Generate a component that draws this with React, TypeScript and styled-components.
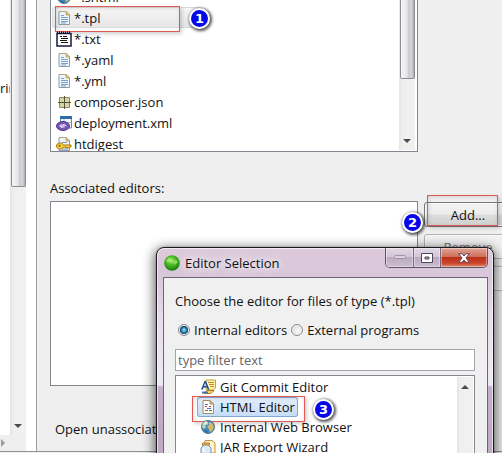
import React from "react";
import styled, { createGlobalStyle, css } from "styled-components";

const GlobalStyle = createGlobalStyle`
  *, *::before, *::after { box-sizing: border-box; }
  html, body { margin: 0; height: 100%; }
  #root { height: 100%; }
  body, button, input {
    font-family: "Open Sans", "Noto Sans", sans-serif;
    font-size: 13px;
    color: #111;
  }
  body { background: #efefef; overflow: hidden; }
  ul { list-style: none; margin: 0; padding: 0; }
`;

/* ---------- page ---------- */

const Page = styled.div`
  position: relative;
  display: flex;
  flex-direction: column;
  height: 100vh;
  overflow: hidden;
`;

const Panes = styled.div`
  display: flex;
  flex: 1;
  min-height: 0;
  margin-bottom: 1px;
  border-bottom: 1px solid #8e9297;
`;

const Sidebar = styled.aside`
  display: flex;
  flex-direction: column;
  width: 37px;
  padding-right: 10px;
  background: #fff;
  border-right: 1px solid #9b9fa4;
`;

const SidebarTop = styled.div`
  display: flex;
  flex: 1;
  min-height: 0;
`;

const SidebarTree = styled.div`
  flex: 1;
  overflow: hidden;
  padding-top: 78px;
  line-height: 20px;
  white-space: nowrap;
`;

const HorizontalBar = styled.div`
  display: flex;
  align-items: center;
  height: 16px;
  background: #efefef;
`;

const Main = styled.main`
  flex: 1;
  min-width: 0;
  padding: 0 4px 0 13px;
`;

/* ---------- scroll bars ---------- */

const Track = styled.div<{ $atEnd?: boolean }>`
  display: flex;
  flex-direction: column;
  justify-content: space-between;
  align-items: center;
  flex: none;
  width: 16px;
  padding-bottom: ${(p) => (p.$atEnd ? "6px" : "0")};
  background: linear-gradient(90deg, #e4e4e4, #efefef 20%, #f1f1f1);
`;

const Thumb = styled.div<{ $length: number }>`
  width: 15px;
  height: ${(p) => p.$length}px;
  border: 1px solid #8b8d91;
  border-top: 0;
  border-radius: 0 0 2px 2px;
  background: linear-gradient(90deg, #f6f6f6, #e6e6e8 45%, #c9cacf 60%, #d6d6da 80%, #a9aab0);
`;

type Direction = "up" | "down" | "right";
const arrowPaths: Record<Direction, string> = {
  up: "M0 5 4 1 8 5Z",
  down: "M0 1H8L4 5Z",
  right: "M1 0 5 4 1 8Z",
};
const Arrow = ({ direction }: { direction: Direction }) => (
  <svg width="8" height={direction === "right" ? 8 : 6} aria-hidden="true">
    <path d={arrowPaths[direction]} fill={direction === "right" ? "#999" : "#4b4b4b"} />
  </svg>
);

/* ---------- lists ---------- */

const FileList = styled.div`
  display: flex;
  height: 152px;
  margin-right: 80px;
  padding: 0 2px 1px 1px;
  overflow: hidden;
  background: #fff;
  border: 1px solid #828790;
  border-top: 0;
`;

const FileRows = styled.ul`
  flex: 1;
  margin-top: -14px;
`;

const FileRow = styled.li<{ $selected?: boolean }>`
  position: relative;
  display: flex;
  align-items: center;
  gap: 2px;
  width: 150px;
  height: 21px;
  padding-left: 4px;
  line-height: 20px;
  white-space: nowrap;
  ${(p) =>
    p.$selected &&
    css`
      border-radius: 3px;
      background: linear-gradient(#f6f6f6, #e6e6e6);
      box-shadow: inset 0 0 0 1px #dadada;
    `}
`;

const SectionLabel = styled.h2`
  margin: 26px 0 3px;
  font-size: 13px;
  font-weight: 400;
  line-height: 20px;
`;

const EditorsArea = styled.div`
  display: flex;
  gap: 6px;
`;

const EditorsBox = styled.div`
  flex: 1;
  height: 185px;
  background: #fff;
  border: 1px solid #828790;
`;

const Actions = styled.div`
  display: flex;
  flex-direction: column;
  gap: 7px;
  width: 88px;
  flex: none;
  margin: 1px -14px 0 0;
`;

const ActionSlot = styled.div`
  position: relative;
  display: flex;
`;

const ActionButton = styled.button`
  flex: 1;
  height: 25px;
  padding: 0;
  border: 1px solid #777;
  border-radius: 3px;
  background: linear-gradient(#f4f4f4, #ececec 48%, #dcdcdc 52%, #d0d0d0);
  box-shadow: inset 0 0 0 1px #fafafa;
  line-height: 20px;
  &:disabled {
    flex: none;
    color: #777;
    border-color: #b0b2b5;
    background: #f1f1f1;
  }
`;

const FootNote = styled.p`
  margin: 33px 0 0 5px;
  line-height: 20px;
  white-space: nowrap;
`;

/* ---------- annotations ---------- */

const Frame = styled.span<{ $box: [number, number, number, number] }>`
  position: absolute;
  left: ${(p) => p.$box[0]}px;
  top: ${(p) => p.$box[1]}px;
  width: ${(p) => p.$box[2]}px;
  height: ${(p) => p.$box[3]}px;
  border: 1px solid #e05a55;
  box-shadow: 2px 2px 4px rgba(0, 0, 0, 0.18), inset 1px 1px 4px rgba(0, 0, 0, 0.12);
  pointer-events: none;
`;

const Badge = styled.span<{ $x: number; $y: number }>`
  position: absolute;
  left: ${(p) => p.$x}px;
  top: ${(p) => p.$y}px;
  width: 21px;
  height: 21px;
  border: 2px solid #fff;
  border-radius: 50%;
  background: #0606e8;
  box-shadow: 1px 1px 3px 1px rgba(0, 0, 0, 0.65);
  color: #fff;
  font: 700 13px/17px "DejaVu Sans", sans-serif;
  text-align: center;
`;

/* ---------- dialog ---------- */

const Dialog = styled.section`
  position: absolute;
  top: 247px;
  right: 8px;
  bottom: -8px;
  left: 156px;
  display: flex;
  flex-direction: column;
  padding: 0 5px 0 6px;
  border: 1px solid #1d1820;
  border-radius: 8px 8px 0 0;
  background: linear-gradient(#ddcbdc 0, #d8c6d9 28px, #e6dcea 70px, #efe9f2 137px, #c4b0ca 139px, #bda8c2);
  box-shadow: inset 0 0 0 1px rgba(255, 255, 255, 0.6), 0 0 1px rgba(0, 0, 0, 0.7),
    0 3px 12px 2px rgba(0, 0, 0, 0.6);
`;

const TitleBar = styled.header`
  display: flex;
  align-items: center;
  gap: 5px;
  height: 29px;
  padding-left: 1px;
`;

const Title = styled.h1`
  flex: 1;
  margin: 0;
  font-size: 13px;
  font-weight: 400;
  line-height: 20px;
  text-shadow: 0 0 8px #fff, 0 0 8px #fff;
`;

const WindowButtons = styled.div`
  display: flex;
  align-self: flex-start;
  height: 20px;
  border: 1px solid #5e5364;
  border-top: 0;
  border-radius: 0 0 5px 5px;
  overflow: hidden;
`;

const WindowButton = styled.button<{ $kind: "plain" | "close" }>`
  display: grid;
  place-items: center;
  width: ${(p) => (p.$kind === "close" ? 47 : 27)}px;
  padding: 0;
  border: 0;
  box-shadow: inset 0 0 0 1px rgba(255, 255, 255, 0.4);
  background: ${(p) =>
    p.$kind === "close"
      ? "linear-gradient(#e0a596, #cf705c 45%, #bb3019 50%, #c9452b 80%, #e08f70)"
      : "linear-gradient(#e3d7e4, #d4c5d7 45%, #bbaac1 50%, #cdbdd2)"};
  & + & {
    border-left: 1px solid #75697b;
  }
`;

const DialogBody = styled.div`
  flex: 1;
  min-height: 0;
  display: flex;
  flex-direction: column;
  padding: 13px 12px 0 11px;
  background: #f0f0f0;
  border: 1px solid #6e6474;
  border-bottom: 0;
`;

const Prompt = styled.p`
  margin: 0;
  line-height: 20px;
  white-space: nowrap;
`;

const RadioRow = styled.div`
  display: flex;
  gap: 4px;
  margin: 9px 0 9px 3px;
`;

const RadioLabel = styled.label`
  display: flex;
  align-items: center;
  gap: 4px;
  height: 20px;
  white-space: nowrap;
`;

const Radio = styled.input`
  appearance: none;
  width: 12px;
  height: 12px;
  margin: 0;
  border: 1px solid #8a8d90;
  border-radius: 50%;
  background: radial-gradient(circle at 60% 60%, #fafafa, #cfd2d5);
  box-shadow: inset 0 0 0 1px #f4f4f4;
  &:checked {
    background: radial-gradient(circle, #6fd0f4 0 1px, #17618f 3px, #12304a 4px, #dfe3e6 5px);
  }
`;

const FilterInput = styled.input`
  height: 22px;
  padding: 0 2px;
  border: 1px solid #a3a6aa;
  border-radius: 0;
  background: #fff;
  &::placeholder {
    color: #666;
    opacity: 1;
  }
`;

const Tree = styled.div`
  display: flex;
  flex: 1;
  min-height: 0;
  margin-top: 4px;
  padding: 1px 1px 0 0;
  border: 1px solid #828790;
  border-bottom: 0;
  background: #fff;
`;

const TreeRows = styled.ul`
  flex: 1;
`;

const TreeRow = styled.li<{ $selected?: boolean }>`
  position: relative;
  display: flex;
  align-items: center;
  gap: 4px;
  width: fit-content;
  height: 20px;
  margin-left: 21px;
  padding: 0 3px;
  line-height: 20px;
  white-space: nowrap;
  ${(p) =>
    p.$selected &&
    css`
      border-radius: 3px;
      background: linear-gradient(#e3effc, #c4dcf7);
      box-shadow: inset 0 0 0 1px #84a7cf;
    `}
`;

const TreeTrack = styled(Track)`
  padding-top: 7px;
`;

/* ---------- icons ---------- */

const Svg = ({ children }: { children: React.ReactNode }) => (
  <svg width="16" height="16" viewBox="0 0 16 16" aria-hidden="true">
    {children}
  </svg>
);

const PageShape = () => (
  <>
    <path d="M3 1.5H10L13.500 5V14.500H3Z" fill="#eef4fc" stroke="#8f9aa6" />
    <path d="M3 1.500H10L13.500 5" fill="none" stroke="#bca86c" />
    <path d="M10 1.500V5H13.500Z" fill="#e7d093" stroke="#bca86c" />
  </>
);

const DocIcon = () => (
  <Svg>
    <PageShape />
    <path d="M5 5.500H8M5 7.500H12M5 9.500H12M5 11.500H12M5 13H10" stroke="#7f9dca" />
  </Svg>
);

const NotepadIcon = () => (
  <Svg>
    <path d="M1 2.500H15V15H1Z" fill="#fff" stroke="#161640" strokeWidth="1.500" />
    <path d="M1 1.500H15" stroke="#111" strokeWidth="2" strokeDasharray="1 1" />
    <path d="M4 5.500H6M7 5.500H11M5 7.500H12M4 9.500H11M5 11.500H12" stroke="#111" />
  </Svg>
);

const JsonIcon = () => (
  <Svg>
    <path d="M3.500 3.500H13.500V13.500H3.500Z" fill="#d5d3a6" stroke="#8c8a60" />
    <path d="M8.500 2V15M2 8.500H15" stroke="#55533a" />
  </Svg>
);

const DeploymentIcon = () => (
  <Svg>
    <path d="M4.500 1.500H15.500V13H4.500Z" fill="#f1f6fb" stroke="#6689a8" />
    <path d="M4 1H16V4H4Z" fill="#2d6ca5" />
    <path d="M8 4V12M5 7.500H15" stroke="#a5bdd1" />
    <ellipse cx="7" cy="11" rx="6.500" ry="4.500" fill="#7654b5" stroke="#56368d" />
    <path d="M3.500 11 6 9.500V12.500ZM10.500 11 8 9.500V12.500M7.500 9 6.500 13" fill="none" stroke="#eee5ff" />
  </Svg>
);

const KeyIcon = () => (
  <Svg>
    <PageShape />
    <path d="M6 6.500H11M6 13H12" stroke="#7d99bf" />
    <path
      d="M4 7C1.500 7 .5 8.500.5 10S2 13 4 13C6 13 7 12 7.500 11H9L10 12 11 11 12 12.500 13.500 11H15V9H7.500C7 8 6 7 4 7Z"
      fill="#f4cf36"
      stroke="#a67a13"
    />
    <circle cx="3.500" cy="9.800" r="1" fill="#76560a" />
  </Svg>
);

const GlobeIcon = () => (
  <Svg>
    <circle cx="8" cy="8" r="6.500" fill="#4089bd" stroke="#5c7586" />
    <path d="M3 4 6 2 8 3 7 5 5 6 6 8 4 10 2 8Z" fill="#c5d9aa" />
    <path d="M9 3 12 4 14 8 12 12 10 13 9 10 7 8 9 6Z" fill="#d4b96b" />
    <path d="M4 11 7 12 8 14 5 13Z" fill="#2567a0" />
    <ellipse cx="6" cy="4.500" rx="2.500" ry="1.500" fill="#fff" opacity=".5" />
  </Svg>
);

const GitIcon = () => (
  <Svg>
    <path d="M6 1H15.500V9L12 11H6Z" fill="#fff2ad" stroke="#c5a23b" />
    <path d="M8 3.500H14M9 5.500H14M10 7.500H14" stroke="#c18d2d" />
    <path d="M1 10.500 4.500 2H6L9.500 10.500H7.500L7 8.500H3.500L3 10.500ZM4 7H6.500L5.200 4Z" fill="#234f8d" />
    <path d="M4 14.500 7 11.500H14L11 14.500Z" fill="#f6d36a" stroke="#a67e29" />
    <path d="M2 13.500H8" stroke="#4973aa" strokeWidth="2" />
  </Svg>
);

const HtmlIcon = () => (
  <Svg>
    <path d="M3 1.500H10L13.500 5V14.500H3Z" fill="#fffdf4" stroke="#a59168" />
    <path d="M10 1.500V5H13.500Z" fill="#e7d093" stroke="#a59168" />
    <path d="M5 5.500H8M7 9.500H11" stroke="#4c76b4" />
    <path d="M5 7.500H7M9 7.500H11M5 11.500H8" stroke="#c4426b" />
    <path d="M9 11.500H12" stroke="#477b67" />
  </Svg>
);

const JarIcon = () => (
  <Svg>
    <path d="M5 1.500H12L15 4V14H5Z" fill="#fff5cf" stroke="#c2953a" />
    <path d="M3 5H9V7L11 9V14Q6 17 1 14V9L3 7Z" fill="#dce9f7" stroke="#7892b0" />
    <path d="M2.500 4H9.500V6H2.500Z" fill="#e4bd64" stroke="#a98034" />
    <path d="M3.500 9V13" stroke="#fff" strokeWidth="1.500" />
  </Svg>
);

const AppIcon = () => (
  <Svg>
    <defs>
      <radialGradient id="orb" cx="45%" cy="35%" r="65%">
        <stop offset="0" stopColor="#b6f27d" />
        <stop offset=".4" stopColor="#4ebd27" />
        <stop offset="1" stopColor="#187d12" />
      </radialGradient>
    </defs>
    <circle cx="8" cy="8" r="7.800" fill="url(#orb)" />
    <path d="M2 6Q4 2 7 3L5 7Q3 9 2 6M9 7Q12 3 14 7L11 10Z" fill="#b9f48c" opacity=".55" />
  </Svg>
);

const MinimizeGlyph = () => (
  <svg width="12" height="5" aria-hidden="true">
    <rect x=".5" y=".5" width="11" height="3" rx="1" fill="#ddd1df" stroke="#a193a8" />
  </svg>
);
const MaximizeGlyph = () => (
  <svg width="12" height="10" aria-hidden="true">
    <path d="M.5.5H11.500V9.500H.5ZM4 4V6H8V4Z" fill="#fff" fillRule="evenodd" stroke="#4c4655" />
  </svg>
);
const CloseGlyph = () => (
  <svg width="12" height="10" aria-hidden="true">
    <path
      d="M.7.700H4L6 3 8 .700H11.300L8 5 11.300 9.300H8L6 7 4 9.300H.700L4 5Z"
      fill="#fff"
      stroke="#5a4650"
    />
  </svg>
);

/* ---------- data ---------- */

const files = [
  { name: "*.shtml", Icon: GlobeIcon },
  { name: "*.tpl", Icon: DocIcon, selected: true },
  { name: "*.txt", Icon: NotepadIcon },
  { name: "*.yaml", Icon: DocIcon },
  { name: "*.yml", Icon: DocIcon },
  { name: "composer.json", Icon: JsonIcon },
  { name: "deployment.xml", Icon: DeploymentIcon },
  { name: "htdigest", Icon: KeyIcon },
];

const editors = [
  { name: "Git Commit Editor", Icon: GitIcon },
  { name: "HTML Editor", Icon: HtmlIcon, selected: true },
  { name: "Internal Web Browser", Icon: GlobeIcon },
  { name: "JAR Export Wizard", Icon: JarIcon },
];

export default function App() {
  return (
    <Page>
      <GlobalStyle />
      <Panes>
        <Sidebar>
          <SidebarTop>
            <SidebarTree>rin</SidebarTree>
            <Track $atEnd>
              <Thumb $length={187} />
              <Arrow direction="down" />
            </Track>
          </SidebarTop>
          <HorizontalBar>
            <Arrow direction="right" />
          </HorizontalBar>
        </Sidebar>
        <Main>
          <FileList>
            <FileRows role="listbox" aria-label="File types">
              {files.map(({ name, Icon, selected }) => (
                <FileRow key={name} role="option" aria-selected={!!selected} $selected={selected}>
                  <Icon />
                  {name}
                  {selected && (
                    <>
                      <Frame $box={[3, -1, 125, 26]} />
                      <Badge $x={137} $y={1}>1</Badge>
                    </>
                  )}
                </FileRow>
              ))}
            </FileRows>
            <Track $atEnd>
              <Thumb $length={79} />
              <Arrow direction="down" />
            </Track>
          </FileList>

          <SectionLabel>Associated editors:</SectionLabel>
          <EditorsArea>
            <EditorsBox />
            <Actions>
              <ActionSlot>
                <ActionButton type="button">Add...</ActionButton>
                <Frame $box={[3, -7, 71, 31]} />
                <Badge $x={-22} $y={10}>2</Badge>
              </ActionSlot>
              <ActionButton type="button" disabled>Remove</ActionButton>
              <ActionButton type="button" disabled>Default</ActionButton>
            </Actions>
          </EditorsArea>
          <FootNote>Open unassociated files with:</FootNote>
        </Main>
      </Panes>

      <Dialog role="dialog" aria-labelledby="dialog-title">
        <TitleBar>
          <AppIcon />
          <Title id="dialog-title">Editor Selection</Title>
          <WindowButtons>
            <WindowButton $kind="plain" type="button" aria-label="Minimize" disabled>
              <MinimizeGlyph />
            </WindowButton>
            <WindowButton $kind="plain" type="button" aria-label="Maximize">
              <MaximizeGlyph />
            </WindowButton>
            <WindowButton $kind="close" type="button" aria-label="Close">
              <CloseGlyph />
            </WindowButton>
          </WindowButtons>
        </TitleBar>
        <DialogBody>
          <Prompt>Choose the editor for files of type (*.tpl)</Prompt>
          <RadioRow>
            <RadioLabel>
              <Radio type="radio" name="source" defaultChecked />
              Internal editors
            </RadioLabel>
            <RadioLabel>
              <Radio type="radio" name="source" />
              External programs
            </RadioLabel>
          </RadioRow>
          <FilterInput type="text" placeholder="type filter text" aria-label="Filter editors" />
          <Tree>
            <TreeRows role="listbox" aria-label="Editors">
              {editors.map(({ name, Icon, selected }) => (
                <TreeRow key={name} role="option" aria-selected={!!selected} $selected={selected}>
                  <Icon />
                  {name}
                  {selected && (
                    <>
                      <Frame $box={[-5, -1, 113, 26]} />
                      <Badge $x={116} $y={2}>3</Badge>
                    </>
                  )}
                </TreeRow>
              ))}
            </TreeRows>
            <TreeTrack>
              <Arrow direction="up" />
            </TreeTrack>
          </Tree>
        </DialogBody>
      </Dialog>
    </Page>
  );
}
